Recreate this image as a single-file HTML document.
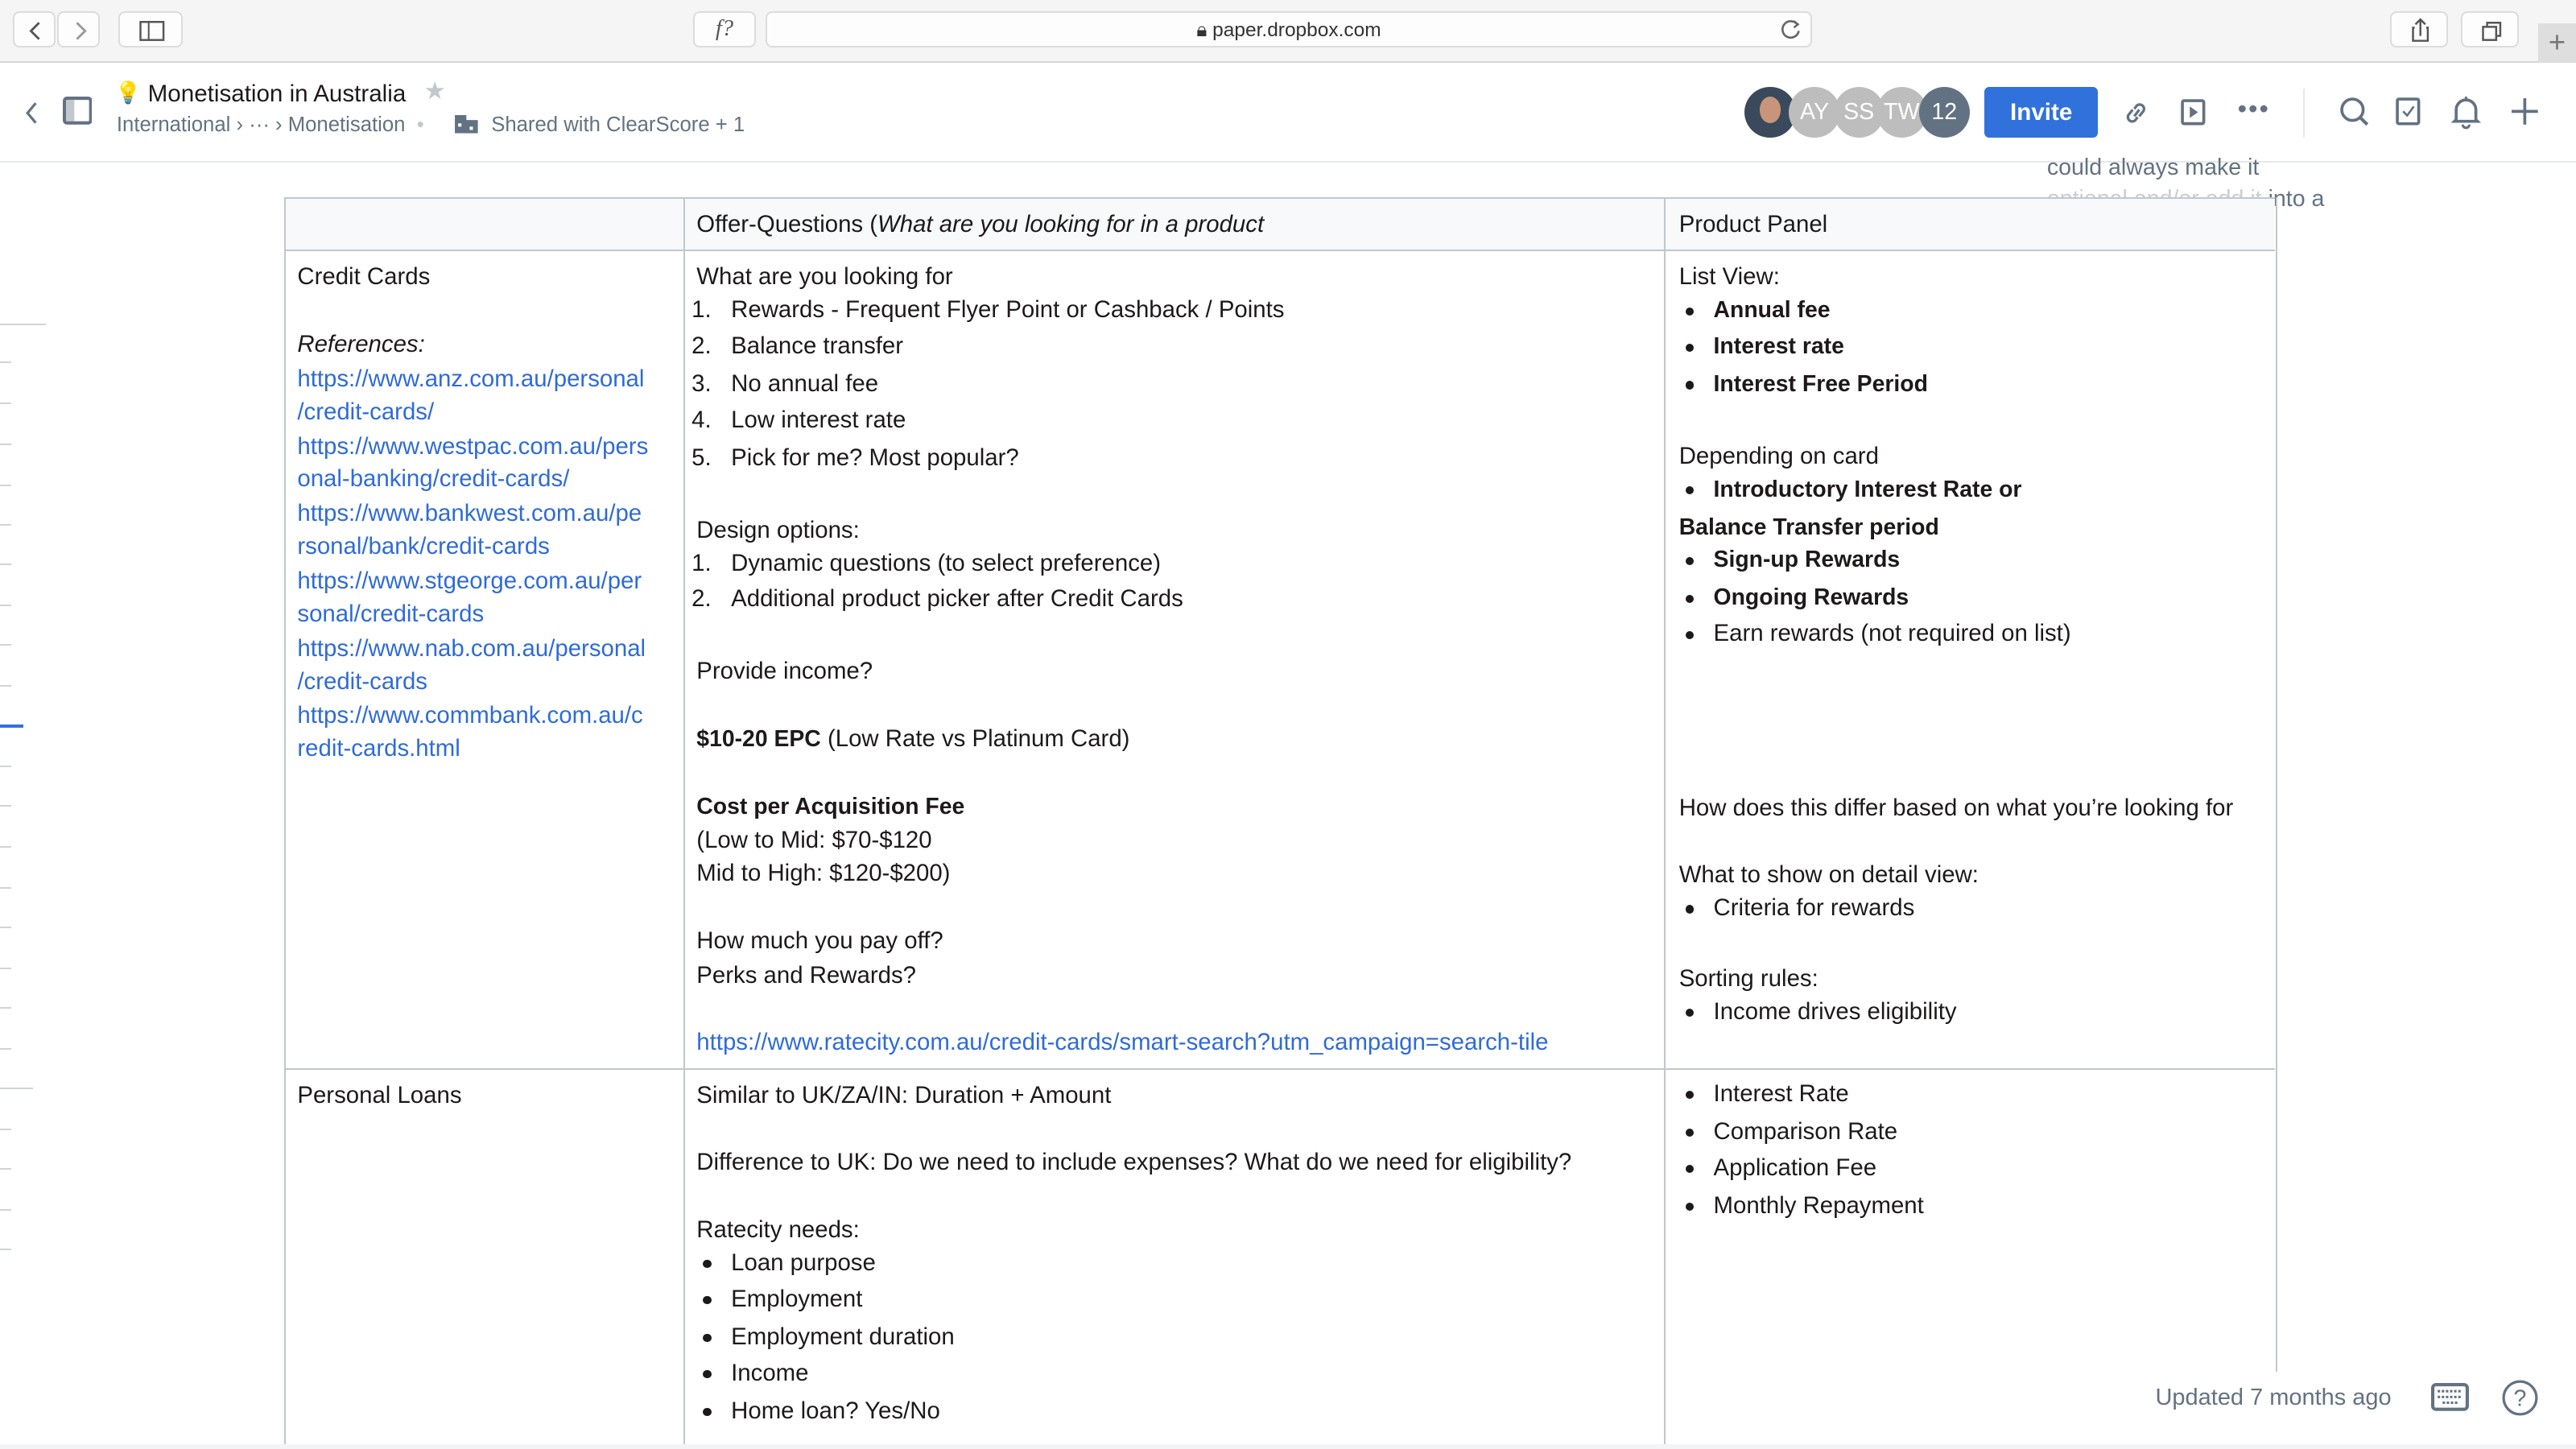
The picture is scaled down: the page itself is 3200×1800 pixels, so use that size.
<!DOCTYPE html>
<html><head><meta charset="utf-8"><style>
html,body{margin:0;padding:0;background:#fff;overflow:hidden}
body{width:3200px;height:1800px}
#z{zoom:2.0408;width:1568px;height:882px;position:relative;font-family:"Liberation Sans",sans-serif;color:#1e1919}
.a{position:absolute;white-space:nowrap}
.t{position:absolute;white-space:nowrap;font-size:14.4px;line-height:20px;color:#1e1919;margin-top:1px}
.l{color:#2f6bd8}
.b,b{font-weight:bold;font-size:13.9px}
.g{color:#637282}
.dot{position:absolute;width:5px;height:5px;border-radius:50%;background:#1e1919}
.btn{position:absolute;top:7px;height:22px;background:#fdfdfd;border:1px solid #dcdcdc;border-radius:4px;box-sizing:border-box}
.av{position:absolute;top:53px;width:31px;height:31px;border-radius:50%;background:#bdbdbd;color:#fff;font-size:14px;line-height:31px;text-align:center}
.tick{position:absolute;left:0;width:7px;height:1px;background:#d0d4d9}
</style></head><body><div id="z">
<div class="a" style="left:0;top:0;width:1568px;height:37px;background:#f5f5f5;border-bottom:1px solid #d6d6d6"></div>
<div class="btn" style="left:8px;width:26px"><svg width="26" height="22"><path d="M15 6 L10 11 L15 16" stroke="#555" stroke-width="1.4" fill="none"/></svg></div>
<div class="btn" style="left:35px;width:26px"><svg width="26" height="22"><path d="M11 6 L16 11 L11 16" stroke="#999" stroke-width="1.4" fill="none"/></svg></div>
<div class="btn" style="left:72px;width:39px"><svg width="39" height="22"><rect x="12.5" y="5.5" width="14" height="11" fill="none" stroke="#555" stroke-width="1.2"/><line x1="17.5" y1="5.5" x2="17.5" y2="16.5" stroke="#555"/></svg></div>
<div class="btn" style="left:422px;width:38px;font-family:'Liberation Serif',serif;font-style:italic;font-size:14px;color:#555;text-align:center;line-height:20px">f?</div>
<div class="btn" style="left:466px;width:637px;font-size:12px;color:#333;text-align:center;line-height:22px">🔒︎ paper.dropbox.com</div>
<svg class="a" style="left:1082px;top:10px" width="16" height="16"><path d="M12 5 A5 5 0 1 0 13 9" stroke="#666" stroke-width="1.3" fill="none"/><path d="M10 3 L12.5 5 L10 7" stroke="#666" stroke-width="1.2" fill="none"/></svg>
<div class="btn" style="left:1455px;width:35px"><svg width="35" height="22"><path d="M17.5 4 V14 M14.5 7 L17.5 4 L20.5 7 M14 9 H13 V17 H22 V9 H21" stroke="#555" stroke-width="1.2" fill="none"/></svg></div>
<div class="btn" style="left:1498px;width:35px"><svg width="35" height="22"><rect x="12.5" y="8.5" width="8" height="8" fill="none" stroke="#555" stroke-width="1.2"/><path d="M15 8.5 V6 H23 V14 H20.5" stroke="#555" stroke-width="1.2" fill="none"/></svg></div>
<div class="a" style="left:1545px;top:14px;width:23px;height:24px;background:#dedede;color:#777;font-size:18px;text-align:center;line-height:24px">+</div>
<div class="a" style="left:0;top:98px;width:1568px;height:1px;background:#e6e8eb"></div>
<svg class="a" style="left:12px;top:60px" width="14" height="18"><path d="M10 3 L5 9 L10 15" stroke="#637282" stroke-width="1.6" fill="none"/></svg>
<svg class="a" style="left:38px;top:59px" width="18" height="18"><rect x="1" y="1" width="16" height="15" rx="1.5" fill="none" stroke="#637282" stroke-width="2"/><rect x="2" y="2" width="5" height="13" fill="#c1c7cd"/></svg>
<div class="a" style="left:70px;top:49px;font-size:13px">💡</div>
<div class="a" style="left:90px;top:49px;font-size:14.5px;color:#1e1919">Monetisation in Australia</div>
<div class="a" style="left:258px;top:47px;font-size:15px;color:#c1c7cd">★</div>
<div class="a g" style="left:71px;top:69px;font-size:12.6px">International › ··· › Monetisation &nbsp;<span style="color:#c1c7cd">•</span></div>
<svg class="a" style="left:276px;top:69px" width="16" height="13"><path d="M1 1 H8 V4 H15 V12 H1 Z" fill="#637282"/><rect x="3" y="6" width="2" height="2" fill="#fff"/><rect x="10" y="8" width="2" height="2" fill="#fff"/></svg>
<div class="a g" style="left:299px;top:69px;font-size:12.6px">Shared with ClearScore + 1</div>
<div class="av" style="left:1062px;background:#3a4a5c;overflow:hidden"><div style="position:absolute;left:9px;top:6px;width:13px;height:16px;border-radius:50%;background:#c9957a"></div></div>
<div class="av" style="left:1089px">AY</div>
<div class="av" style="left:1116px">SS</div>
<div class="av" style="left:1142px">TW</div>
<div class="av" style="left:1168px;background:#637282">12</div>
<div class="a" style="left:1208px;top:53px;width:69px;height:31px;background:#3171db;border-radius:3px;color:#fff;font-size:14.5px;font-weight:bold;text-align:center;line-height:31px">Invite</div>
<svg class="a" style="left:1291px;top:60px" width="18" height="18"><path d="M8 11 L11 7 M7 7 L5 9.5 a2.5 2.5 0 0 0 3.5 4 L10 11.5 M11 11 L13 8.5 a2.5 2.5 0 0 0 -3.5 -4 L8 6.5" stroke="#637282" stroke-width="1.6" fill="none"/></svg>
<svg class="a" style="left:1327px;top:60px" width="18" height="18"><rect x="1.5" y="1.5" width="13" height="14" rx="1" fill="none" stroke="#637282" stroke-width="1.8"/><path d="M6 5 L11 8.5 L6 12 Z" fill="#637282"/></svg>
<div class="a" style="left:1362px;top:57px;font-size:16px;color:#637282;letter-spacing:1px">•••</div>
<div class="a" style="left:1402px;top:54px;width:1px;height:30px;background:#e6e8eb"></div>
<svg class="a" style="left:1424px;top:59px" width="20" height="20"><circle cx="8" cy="8" r="6.5" fill="none" stroke="#637282" stroke-width="1.8"/><path d="M12.5 12.5 L17 17" stroke="#637282" stroke-width="2"/></svg>
<svg class="a" style="left:1458px;top:59px" width="18" height="20"><rect x="1.5" y="1.5" width="13" height="15" rx="1" fill="none" stroke="#637282" stroke-width="1.8"/><path d="M5 9 L7.5 11.5 L11.5 6" stroke="#637282" stroke-width="1.3" fill="none"/></svg>
<svg class="a" style="left:1492px;top:58px" width="18" height="22"><path d="M3 15 V9 a6 6 0 0 1 12 0 V15 L16 16 H2 Z" fill="none" stroke="#637282" stroke-width="1.8"/><path d="M7 18 a2 2 0 0 0 4 0" stroke="#637282" stroke-width="1.5" fill="none"/><path d="M9 1 V3" stroke="#637282" stroke-width="1.5"/></svg>
<svg class="a" style="left:1528px;top:59px" width="18" height="18"><path d="M9 1 V17 M1 9 H17" stroke="#637282" stroke-width="1.8"/></svg>
<div class="a g" style="left:1246px;top:94px;font-size:14px">could always make it</div>
<div class="a g" style="left:1246px;top:113px;font-size:14px;color:#c9ced4">optional and/or add it <span style="color:#637282">into a</span></div>
<div class="tick" style="top:197px;width:28px"></div>
<div class="tick" style="top:220px"></div><div class="tick" style="top:245px"></div><div class="tick" style="top:270px"></div><div class="tick" style="top:295px"></div><div class="tick" style="top:319px"></div><div class="tick" style="top:343px"></div><div class="tick" style="top:368px"></div><div class="tick" style="top:392px"></div><div class="tick" style="top:417px"></div>
<div class="tick" style="top:441px;width:14px;height:2px;background:#3171db"></div>
<div class="tick" style="top:466px"></div><div class="tick" style="top:490px"></div><div class="tick" style="top:515px"></div><div class="tick" style="top:540px"></div><div class="tick" style="top:564px"></div><div class="tick" style="top:589px"></div><div class="tick" style="top:613px"></div><div class="tick" style="top:638px"></div><div class="tick" style="top:662px;width:20px"></div><div class="tick" style="top:687px"></div><div class="tick" style="top:711px"></div><div class="tick" style="top:736px"></div><div class="tick" style="top:760px"></div>
<div class="a" style="left:173px;top:120px;width:1212px;height:32px;background:#f7f9fa"></div>
<div class="a" style="left:173px;top:120px;width:1212px;height:1px;background:#c1c7cd"></div>
<div class="a" style="left:173px;top:152px;width:1212px;height:1px;background:#c1c7cd"></div>
<div class="a" style="left:173px;top:650px;width:1212px;height:1px;background:#c1c7cd"></div>
<div class="a" style="left:173px;top:120px;width:1px;height:762px;background:#c1c7cd"></div>
<div class="a" style="left:416px;top:120px;width:1px;height:762px;background:#c1c7cd"></div>
<div class="a" style="left:1013px;top:120px;width:1px;height:762px;background:#c1c7cd"></div>
<div class="a" style="left:1385px;top:120px;width:1px;height:715px;background:#c1c7cd"></div>
<div class="t" style="left:424px;top:126px">Offer-Questions (<i>What are you looking for in a product</i></div>
<div class="t" style="left:1022px;top:126px">Product Panel</div>
<div class="t" style="left:181px;top:158px">Credit Cards</div>
<div class="t" style="left:181px;top:199px"><i>References:</i></div>
<div class="t l" style="left:181px;top:220px">https://www.anz.com.au/personal</div>
<div class="t l" style="left:181px;top:240px">/credit-cards/</div>
<div class="t l" style="left:181px;top:261px">https://www.westpac.com.au/pers</div>
<div class="t l" style="left:181px;top:281px">onal-banking/credit-cards/</div>
<div class="t l" style="left:181px;top:302px">https://www.bankwest.com.au/pe</div>
<div class="t l" style="left:181px;top:322px">rsonal/bank/credit-cards</div>
<div class="t l" style="left:181px;top:343px">https://www.stgeorge.com.au/per</div>
<div class="t l" style="left:181px;top:363px">sonal/credit-cards</div>
<div class="t l" style="left:181px;top:384px">https://www.nab.com.au/personal</div>
<div class="t l" style="left:181px;top:404px">/credit-cards</div>
<div class="t l" style="left:181px;top:425px">https://www.commbank.com.au/c</div>
<div class="t l" style="left:181px;top:445px">redit-cards.html</div>
<div class="t" style="left:181px;top:656px">Personal Loans</div>
<div class="t" style="left:424px;top:158px">What are you looking for</div>
<div class="t" style="left:421px;top:178px">1.</div><div class="t" style="left:445px;top:178px">Rewards - Frequent Flyer Point or Cashback / Points</div>
<div class="t" style="left:421px;top:200px">2.</div><div class="t" style="left:445px;top:200px">Balance transfer</div>
<div class="t" style="left:421px;top:223px">3.</div><div class="t" style="left:445px;top:223px">No annual fee</div>
<div class="t" style="left:421px;top:245px">4.</div><div class="t" style="left:445px;top:245px">Low interest rate</div>
<div class="t" style="left:421px;top:268px">5.</div><div class="t" style="left:445px;top:268px">Pick for me? Most popular?</div>
<div class="t" style="left:424px;top:312px">Design options:</div>
<div class="t" style="left:421px;top:332px">1.</div><div class="t" style="left:445px;top:332px">Dynamic questions (to select preference)</div>
<div class="t" style="left:421px;top:354px">2.</div><div class="t" style="left:445px;top:354px">Additional product picker after Credit Cards</div>
<div class="t" style="left:424px;top:398px">Provide income?</div>
<div class="t" style="left:424px;top:439px"><b>$10-20 EPC</b> (Low Rate vs Platinum Card)</div>
<div class="t b" style="left:424px;top:480px">Cost per Acquisition Fee</div>
<div class="t" style="left:424px;top:501px">(Low to Mid: $70-$120</div>
<div class="t" style="left:424px;top:521px">Mid to High: $120-$200)</div>
<div class="t" style="left:424px;top:562px">How much you pay off?</div>
<div class="t" style="left:424px;top:583px">Perks and Rewards?</div>
<div class="t l" style="left:424px;top:624px">https://www.ratecity.com.au/credit-cards/smart-search?utm_campaign=search-tile</div>
<div class="t" style="left:424px;top:656px">Similar to UK/ZA/IN: Duration + Amount</div>
<div class="t" style="left:424px;top:697px">Difference to UK: Do we need to include expenses? What do we need for eligibility?</div>
<div class="t" style="left:424px;top:738px">Ratecity needs:</div>
<div class="dot" style="left:428px;top:767px"></div><div class="t" style="left:445px;top:758px">Loan purpose</div>
<div class="dot" style="left:428px;top:789px"></div><div class="t" style="left:445px;top:780px">Employment</div>
<div class="dot" style="left:428px;top:812px"></div><div class="t" style="left:445px;top:803px">Employment duration</div>
<div class="dot" style="left:428px;top:834px"></div><div class="t" style="left:445px;top:825px">Income</div>
<div class="dot" style="left:428px;top:857px"></div><div class="t" style="left:445px;top:848px">Home loan? Yes/No</div>
<div class="t" style="left:1022px;top:158px">List View:</div>
<div class="dot" style="left:1026px;top:187px"></div><div class="t b" style="left:1043px;top:178px">Annual fee</div>
<div class="dot" style="left:1026px;top:209px"></div><div class="t b" style="left:1043px;top:200px">Interest rate</div>
<div class="dot" style="left:1026px;top:232px"></div><div class="t b" style="left:1043px;top:223px">Interest Free Period</div>
<div class="t" style="left:1022px;top:267px">Depending on card</div>
<div class="dot" style="left:1026px;top:296px"></div><div class="t b" style="left:1043px;top:287px">Introductory Interest Rate or</div>
<div class="t b" style="left:1022px;top:310px">Balance Transfer period</div>
<div class="dot" style="left:1026px;top:339px"></div><div class="t b" style="left:1043px;top:330px">Sign-up Rewards</div>
<div class="dot" style="left:1026px;top:362px"></div><div class="t b" style="left:1043px;top:353px">Ongoing Rewards</div>
<div class="dot" style="left:1026px;top:384px"></div><div class="t" style="left:1043px;top:375px">Earn rewards (not required on list)</div>
<div class="t" style="left:1022px;top:481px">How does this differ based on what you’re looking for</div>
<div class="t" style="left:1022px;top:522px">What to show on detail view:</div>
<div class="dot" style="left:1026px;top:551px"></div><div class="t" style="left:1043px;top:542px">Criteria for rewards</div>
<div class="t" style="left:1022px;top:585px">Sorting rules:</div>
<div class="dot" style="left:1026px;top:614px"></div><div class="t" style="left:1043px;top:605px">Income drives eligibility</div>
<div class="dot" style="left:1026px;top:664px"></div><div class="t" style="left:1043px;top:655px">Interest Rate</div>
<div class="dot" style="left:1026px;top:687px"></div><div class="t" style="left:1043px;top:678px">Comparison Rate</div>
<div class="dot" style="left:1026px;top:709px"></div><div class="t" style="left:1043px;top:700px">Application Fee</div>
<div class="dot" style="left:1026px;top:732px"></div><div class="t" style="left:1043px;top:723px">Monthly Repayment</div>
<div class="a" style="left:0;top:879px;width:1568px;height:3px;background:#f3f4f5"></div>
<div class="a g" style="left:1312px;top:843px;font-size:14.2px">Updated 7 months ago</div>
<svg class="a" style="left:1480px;top:842px" width="23" height="17"><rect x="1" y="1" width="21" height="15" rx="2" fill="none" stroke="#637282" stroke-width="2"/><path d="M4 5 H19 M4 8.5 H19 M7 12 H16" stroke="#637282" stroke-width="1.5" stroke-dasharray="1.5 1"/></svg>
<svg class="a" style="left:1522px;top:839px" width="24" height="24"><circle cx="12" cy="12" r="10" fill="none" stroke="#637282" stroke-width="1.6"/><text x="12" y="17" text-anchor="middle" font-family="Liberation Sans" font-size="14" fill="#637282">?</text></svg>
</div></body></html>
